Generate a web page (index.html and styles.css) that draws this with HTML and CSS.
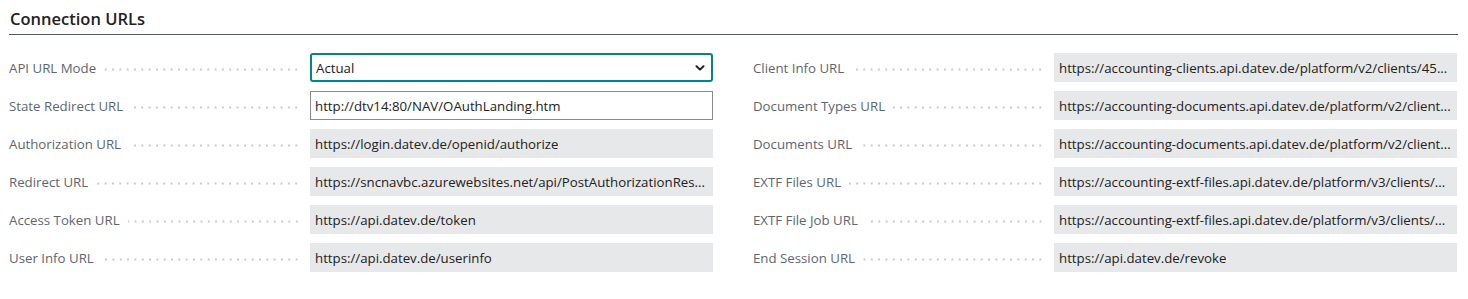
FILE: index.html
```html
<!DOCTYPE html>
<html lang="en">
<head>
    <meta charset="UTF-8">
    <meta name="viewport" content="width=device-width, initial-scale=1.0">
    <title>Connection URLs</title>
    <link rel="stylesheet" href="styles.css">
</head>
<body>
    <div class="section">
        <div class="section-title">Connection URLs</div>

        <div class="field-grid">
            <div class="field-column">
                <div class="field-row">
                    <div class="caption"><span>API URL Mode</span><span class="leader"></span></div>
                    <div class="select-box">
                        <span class="value-text">Actual</span>
                        <svg class="chevron" width="10" height="6" viewBox="0 0 10 6">
                            <path d="M1.5 1.2 L5 4.6 L8.5 1.2" fill="none" stroke="#212121" stroke-width="2" stroke-linecap="round" stroke-linejoin="round"/>
                        </svg>
                    </div>
                </div>
                <div class="field-row">
                    <div class="caption"><span>State Redirect URL</span><span class="leader"></span></div>
                    <div class="input-box"><span class="value-text">http://dtv14:80/NAV/OAuthLanding.htm</span></div>
                </div>
                <div class="field-row">
                    <div class="caption"><span>Authorization URL</span><span class="leader"></span></div>
                    <div class="readonly-box"><span class="value-text">https://login.datev.de/openid/authorize</span></div>
                </div>
                <div class="field-row">
                    <div class="caption"><span>Redirect URL</span><span class="leader"></span></div>
                    <div class="readonly-box"><span class="value-text">https://sncnavbc.azurewebsites.net/api/PostAuthorizationRes...</span></div>
                </div>
                <div class="field-row">
                    <div class="caption"><span>Access Token URL</span><span class="leader"></span></div>
                    <div class="readonly-box"><span class="value-text">https://api.datev.de/token</span></div>
                </div>
                <div class="field-row">
                    <div class="caption"><span>User Info URL</span><span class="leader"></span></div>
                    <div class="readonly-box"><span class="value-text">https://api.datev.de/userinfo</span></div>
                </div>
            </div>

            <div class="field-column">
                <div class="field-row">
                    <div class="caption"><span>Client Info URL</span><span class="leader"></span></div>
                    <div class="readonly-box"><span class="value-text">https://accounting-clients.api.datev.de/platform/v2/clients/45...</span></div>
                </div>
                <div class="field-row">
                    <div class="caption"><span>Document Types URL</span><span class="leader"></span></div>
                    <div class="readonly-box"><span class="value-text">https://accounting-documents.api.datev.de/platform/v2/client...</span></div>
                </div>
                <div class="field-row">
                    <div class="caption"><span>Documents URL</span><span class="leader"></span></div>
                    <div class="readonly-box"><span class="value-text">https://accounting-documents.api.datev.de/platform/v2/client...</span></div>
                </div>
                <div class="field-row">
                    <div class="caption"><span>EXTF Files URL</span><span class="leader"></span></div>
                    <div class="readonly-box"><span class="value-text">https://accounting-extf-files.api.datev.de/platform/v3/clients/...</span></div>
                </div>
                <div class="field-row">
                    <div class="caption"><span>EXTF File Job URL</span><span class="leader"></span></div>
                    <div class="readonly-box"><span class="value-text">https://accounting-extf-files.api.datev.de/platform/v3/clients/...</span></div>
                </div>
                <div class="field-row">
                    <div class="caption"><span>End Session URL</span><span class="leader"></span></div>
                    <div class="readonly-box"><span class="value-text">https://api.datev.de/revoke</span></div>
                </div>
            </div>
        </div>
    </div>
</body>
</html>
```

FILE: styles.css
```css
body {
    margin: 0;
    font-family: 'Segoe UI', 'Open Sans', sans-serif;
    background-color: #fff;
    color: #212121;
}

.section {
    padding: 8px 10px 0 9px;
}

.section-title {
    font-size: 16.5px;
    font-weight: 600;
    line-height: 22px;
    padding: 0 0 4px 1px;
    border-bottom: 1px solid #4e5a6a;
    color: #212121;
}

.field-grid {
    display: grid;
    grid-template-columns: 704px 704px;
    column-gap: 40px;
    margin-top: 18px;
}

.field-row {
    display: flex;
    align-items: center;
    height: 29px;
    margin-bottom: 9px;
    font-size: 13.25px;
}

.caption {
    flex: 0 0 301px;
    display: flex;
    align-items: center;
    color: #5d6670;
    line-height: 29px;
    padding-top: 1px;
    white-space: nowrap;
}

/* Punktlinie zwischen Beschriftung und Feld */
.leader {
    flex: 1;
    height: 3px;
    margin: 3px 10px 0 8px;
    background-image: radial-gradient(circle, #c6c8ca 0.9px, transparent 1.3px);
    background-size: 7.33px 3px;
    background-position: right center;
    background-repeat: repeat-x;
}

.select-box,
.input-box,
.readonly-box {
    flex: 1;
    box-sizing: border-box;
    height: 29px;
    display: flex;
    align-items: center;
    overflow: hidden;
    white-space: nowrap;
    padding-top: 1px;
}

.value-text {
    overflow: hidden;
    text-overflow: ellipsis;
}

.select-box {
    border: 2px solid #00858a;
    border-radius: 3px;
    padding: 0 6px 0 4px;
    justify-content: space-between;
}

.input-box {
    border: 1px solid #8a8a8a;
    padding: 1px 5px 0 4px;
}

.readonly-box {
    background-color: #e7e8e9;
    padding: 1px 5px 0;
}

.chevron {
    flex-shrink: 0;
}
```
